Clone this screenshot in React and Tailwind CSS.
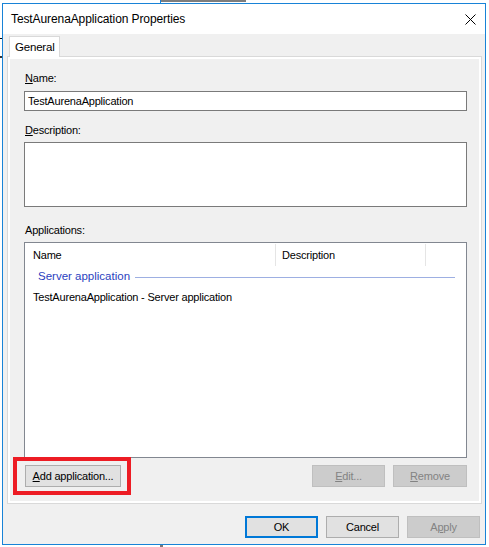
import React from "react";

function Btn({ children, className = "", disabled = false, def = false }) {
  let cls =
    "h-[22px] flex items-center justify-center whitespace-nowrap leading-none ";
  if (disabled) cls += "bg-[#cccccc] border border-[#bfbfbf] text-[#838383] ";
  else if (def) cls += "bg-[#e1e1e1] border-2 border-[#0078d7] text-black ";
  else cls += "bg-[#e1e1e1] border border-[#adadad] text-black ";
  return <div className={cls + className}>{children}</div>;
}

export default function App() {
  return (
    <div className="w-[489px] h-[547px] bg-white relative overflow-hidden pt-[3px] pl-[2px] [font-family:'Liberation_Sans',Arial,sans-serif] text-[11px] tracking-[-0.2px] text-black">
      {/* background window scraps */}
      <div className="absolute left-[160px] top-0 w-[86px] h-[2px] bg-[#7d7d7d]" />
      <div className="absolute left-[160px] top-0 w-[1px] h-[3px] bg-[#1883d7]" />
      <div className="absolute left-0 top-[38px] w-[2px] h-[1px] bg-black" />
      <div className="absolute left-0 top-[56px] w-[2px] h-[2px] bg-[#333]" />
      <div className="absolute left-[160px] top-[545px] w-[3px] h-[2px] bg-[#777]" />

      <div className="w-[484px] h-[542px] border border-[#1883d7] flex flex-col">
        {/* title bar */}
        <div className="h-[30px] bg-white flex items-center justify-between pl-[8px] pr-[9px] shrink-0">
          <span className="text-[12px] tracking-[-0.1px] text-black whitespace-nowrap">TestAurenaApplication Properties</span>
          <svg width="11" height="11" viewBox="0 0 11 11">
            <path d="M0.5 0.5 L10.5 10.5 M10.5 0.5 L0.5 10.5" stroke="#000" strokeWidth="1" />
          </svg>
        </div>

        {/* body */}
        <div className="flex-1 bg-[#f0f0f0] flex flex-col pl-[4px] pr-[3px] pt-[2px]">
          {/* tab */}
          <div className="flex">
            <div className="ml-[2px] h-[21px] w-[51px] bg-white border border-b-0 border-[#d9d9d9] flex items-center pl-[5px] pt-[1px] -mb-[1px] relative z-10 text-[11.5px]">
              General
            </div>
          </div>
          {/* panel */}
          <div className="h-[448px] border border-[#d9d9d9] bg-white p-[2px]">
            <div className="h-full bg-[#f0f0f0] pt-[11px] pl-[14px] pr-[12px] flex flex-col">
              <div className="h-[16px] flex items-center pl-[1px]">
                <span><span className="underline">N</span>ame:</span>
              </div>
              <div className="mt-[5px] h-[20px] bg-white border border-[#7a7a7a] flex items-center pl-[3px]">
                TestAurenaApplication
              </div>
              <div className="mt-[11px] h-[16px] flex items-center pl-[1px]">
                <span><span className="underline">D</span>escription:</span>
              </div>
              <div className="mt-[4px] h-[65px] bg-white border border-[#7a7a7a]" />
              <div className="mt-[15px] h-[16px] flex items-center pl-[1px]">Applications:</div>
              <div className="mt-[4px] h-[216px] bg-white border border-[#828790] flex flex-col">
                <div className="h-[24px] flex items-stretch shrink-0">
                  <div className="w-[251px] flex items-center pl-[8px] border-r border-[#e5e5e5] my-[1px]">Name</div>
                  <div className="w-[150px] flex items-center pl-[6px] border-r border-[#e5e5e5] my-[1px]">Description</div>
                </div>
                <div className="h-[20px] flex items-center pl-[13px] pr-[11px]">
                  <span className="text-[#2b3fc0] whitespace-nowrap text-[11.5px] tracking-[0px]">Server application</span>
                  <div className="flex-1 h-[1px] bg-[#9dafe2] ml-[5px]" />
                </div>
                <div className="h-[20px] flex items-center pl-[8px] whitespace-nowrap">
                  TestAurenaApplication - Server application
                </div>
              </div>
              <div className="mt-[7px] flex justify-between items-center">
                <div className="relative ml-[1px]">
                  <Btn className="w-[96px]">
                    <span><span className="underline">A</span>dd application...</span>
                  </Btn>
                  <div className="absolute -left-[12px] -top-[8px] w-[118px] h-[38px] border-4 border-[#ed1c24]" />
                </div>
                <div className="flex gap-[8px]">
                  <Btn disabled className="w-[73px]">
                    <span><span className="underline">E</span>dit...</span>
                  </Btn>
                  <Btn disabled className="w-[74px]">
                    <span><span className="underline">R</span>emove</span>
                  </Btn>
                </div>
              </div>
            </div>
          </div>
          {/* bottom buttons */}
          <div className="mt-[12px] flex justify-end gap-[8px] pr-[2px]">
            <Btn def className="w-[73px]">OK</Btn>
            <Btn className="w-[73px]">Cancel</Btn>
            <Btn disabled className="w-[73px]">
              <span>A<span className="underline">p</span>ply</span>
            </Btn>
          </div>
        </div>
      </div>
    </div>
  );
}
